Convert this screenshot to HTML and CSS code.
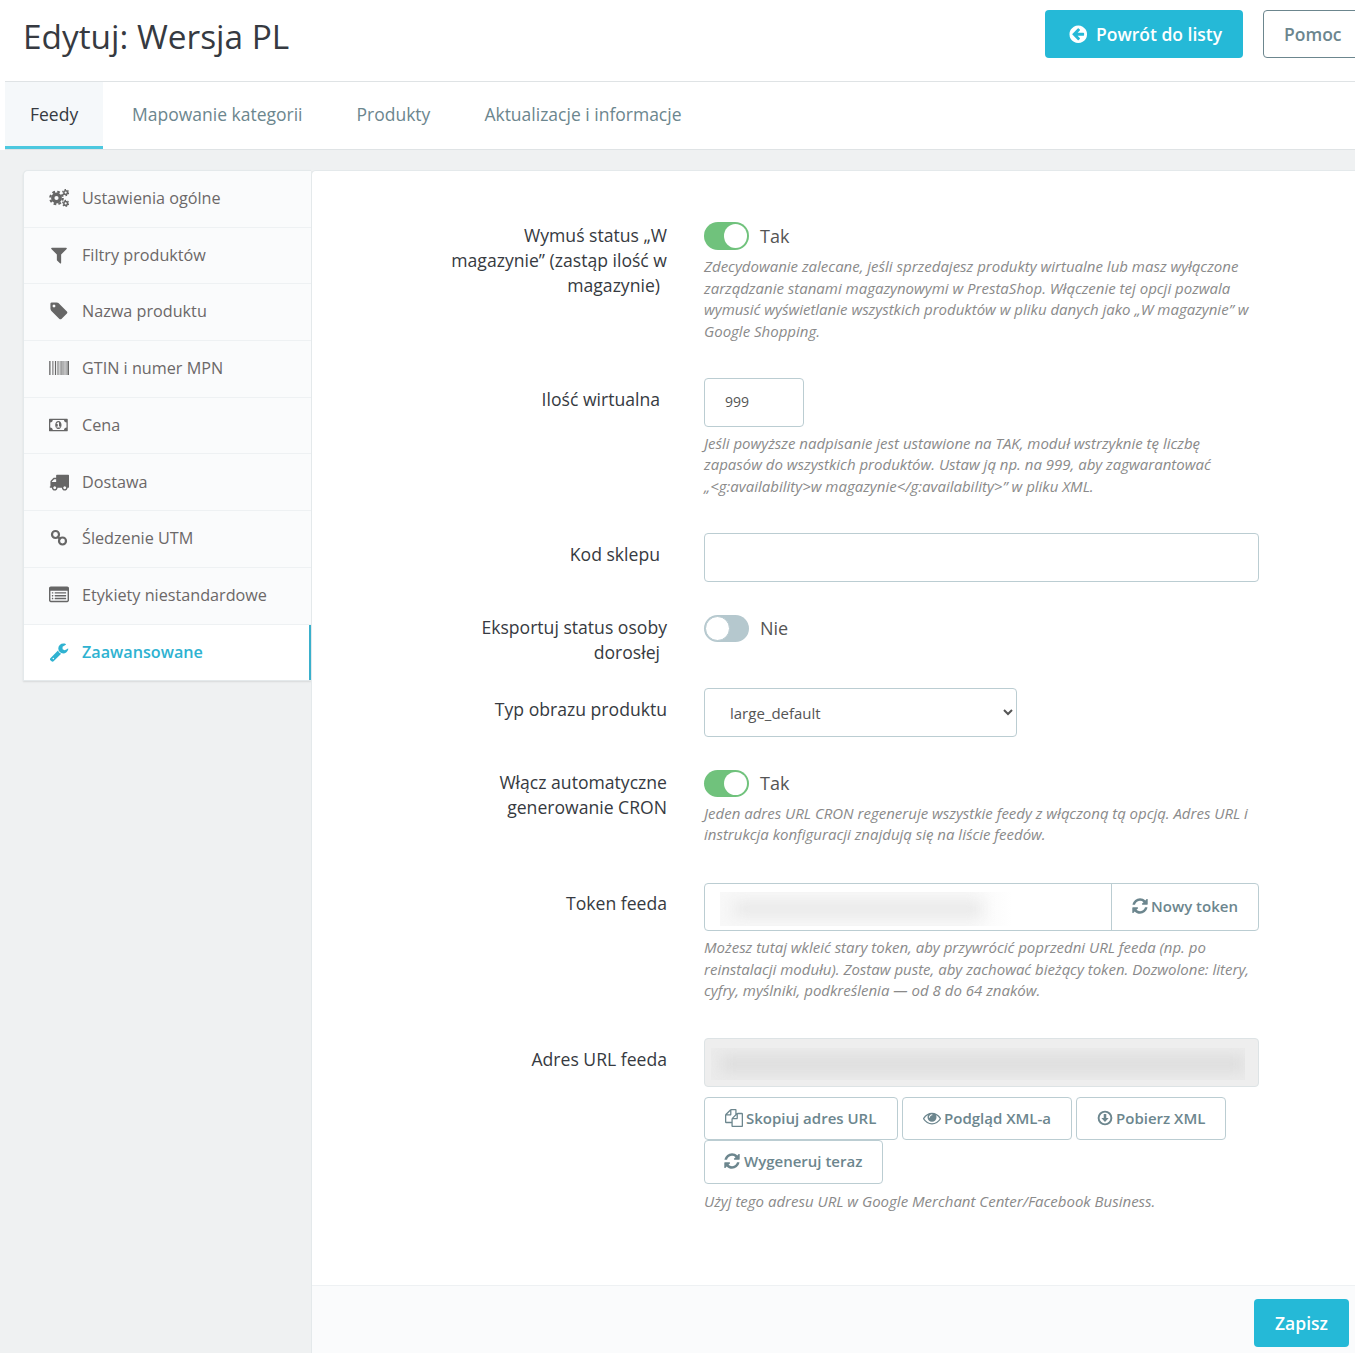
FILE: index.html
```html
<!DOCTYPE html>
<html lang="pl">
<head>
<meta charset="utf-8">
<title>Edytuj: Wersja PL</title>
<link rel="stylesheet" href="styles.css">
</head>
<body>
<svg class="defs" aria-hidden="true">
  <symbol id="i-refresh" viewBox="0 0 1792 1792"><path d="M1639 1056q0 5-1 7-64 268-268 434.5t-478 166.5q-146 0-282.5-55t-243.5-157l-129 129q-19 19-45 19t-45-19-19-45v-448q0-26 19-45t45-19h448q26 0 45 19t19 45-19 45l-137 137q71 66 161 102t187 36q134 0 250-65t186-179q11-17 53-117 8-23 30-23h192q13 0 22.5 9.5t9.5 22.5zm25-800v448q0 26-19 45t-45 19h-448q-26 0-45-19t-19-45 19-45l138-138q-148-137-349-137-134 0-250 65t-186 179q-11 17-53 117-8 23-30 23h-199q-13 0-22.5-9.5t-9.5-22.5v-7q65-268 270-434.5t480-166.5q146 0 284 55.5t245 156.5l130-129q19-19 45-19t45 19 19 45z"/></symbol>
</svg>
<div class="page">
  <header class="head">
    <h1 class="title">Edytuj: Wersja PL</h1>
    <div class="head-actions">
      <a class="btn-primary btn-back"><svg class="ic-back" viewBox="0 0 1792 1792"><path d="M1408 960v-128q0-26-19-45t-45-19h-502l189-189q19-19 19-45t-19-45l-91-91q-18-18-45-18t-45 18l-362 362-91 91q-18 18-18 45t18 45l91 91 362 362q18 18 45 18t45-18l91-91q18-18 18-45t-18-45l-189-189h502q26 0 45-19t19-45zm256-64q0 209-103 385.5t-279.5 279.5-385.5 103-385.5-103-279.5-279.5-103-385.5 103-385.5 279.5-279.5 385.5-103 385.5 103 279.5 279.5 103 385.5z"/></svg>Powrót do listy</a>
      <a class="btn-help">Pomoc</a>
    </div>
  </header>
  <nav class="tabs">
    <a class="tab tab-active">Feedy</a>
    <a class="tab">Mapowanie kategorii</a>
    <a class="tab">Produkty</a>
    <a class="tab">Aktualizacje i informacje</a>
  </nav>
  <main class="content">
    <aside class="side">
      <a class="side-item"><svg class="side-ic" viewBox="0 0 24 24"><g fill="none" stroke="currentColor"><circle cx="9" cy="12" r="4.500" stroke-width="4"/><circle cx="9" cy="12" r="7.500" stroke-width="2.600" stroke-dasharray="3.200 2.690"/><circle cx="20" cy="5.500" r="2.200" stroke-width="1.800"/><circle cx="20" cy="5.500" r="3.600" stroke-width="1.400" stroke-dasharray="1.900 1.870"/><circle cx="20" cy="18.500" r="2.200" stroke-width="1.800"/><circle cx="20" cy="18.500" r="3.600" stroke-width="1.400" stroke-dasharray="1.900 1.870"/></g></svg>Ustawienia ogólne</a>
      <a class="side-item"><svg class="side-ic" viewBox="0 0 1792 1792"><path d="M1595 295q17 41-14 70l-493 493v742q0 42-39 59-13 5-25 5-27 0-45-19l-256-256q-19-19-19-45v-486l-493-493q-31-29-14-70 17-39 59-39h1280q42 0 59 39z"/></svg>Filtry produktów</a>
      <a class="side-item"><svg class="side-ic" viewBox="0 0 1792 1792"><path d="M576 448q0-53-37.5-90.5t-90.5-37.5-90.5 37.5-37.5 90.5 37.5 90.5 90.5 37.5 90.5-37.5 37.5-90.5zm1067 576q0 53-37 90l-491 492q-39 37-91 37-53 0-90-37l-715-716q-38-37-64.5-101t-26.5-117v-416q0-52 38-90t90-38h416q53 0 117 26.5t102 64.5l715 714q37 39 37 91z"/></svg>Nazwa produktu</a>
      <a class="side-item"><svg class="side-ic" viewBox="0 0 20 20"><path d="M0 3h.8v14H0zM1.5 3h.5v14h-.5zM3 3h.6v14H3zM4.6 3h.5v14h-.5zM6 3h1.1v14H6zM8 3h.5v14H8zM9.5 3h.8v14h-.8zM11 3h.5v14H11zM12.4 3h1.1v14h-1.1zM14.4 3h.5v14h-.5zM15.6 3h.8v14h-.8zM17.2 3h.5v14h-.5zM18.4 3H20v14h-1.6z"/></svg>GTIN i numer MPN</a>
      <a class="side-item"><svg class="side-ic" viewBox="0 0 2048 1792"><path d="M768 1152h384v-96h-128v-448h-114l-148 137 77 80q42-37 55-57h2v288h-128v96zm512-256q0 70-21 142t-59.5 134-101.5 101-138 39-138-39-101.5-101-59.5-134-21-142 21-142 59.5-134 101.5-101 138-39 138 39 101.5 101 59.5 134 21 142zm512 256v-512q-106 0-181-75t-75-181h-1152q0 106-75 181t-181 75v512q106 0 181 75t75 181h1152q0-106 75-181t181-75zm128-832v1152q0 26-19 45t-45 19h-1792q-26 0-45-19t-19-45v-1152q0-26 19-45t45-19h1792q26 0 45 19t19 45z"/></svg>Cena</a>
      <a class="side-item"><svg class="side-ic" viewBox="0 0 1792 1792"><path d="M640 1408q0-52-38-90t-90-38-90 38-38 90 38 90 90 38 90-38 38-90zm-384-512h384v-256h-158q-13 0-22 9l-195 195q-9 9-9 22v30zm1280 512q0-52-38-90t-90-38-90 38-38 90 38 90 90 38 90-38 38-90zm256-1088v1024q0 15-4 26.5t-13.5 18.5-16.5 11.5-23.5 6-22.5 2-25.5 0-22.5-.5q0 106-75 181t-181 75-181-75-75-181h-384q0 106-75 181t-181 75-181-75-75-181h-64q-3 0-22.5.5t-25.5 0-22.5-2-23.5-6-16.5-11.5-13.5-18.5-4-26.5q0-26 19-45t45-19v-320q0-8-.5-35t0-38 2.5-34.5 6.5-37 14-30.5 22.5-30l198-198q19-19 50.5-32t58.5-13h160v-192q0-26 19-45t45-19h1024q26 0 45 19t19 45z"/></svg>Dostawa</a>
      <a class="side-item"><svg class="side-ic" viewBox="0 0 20 20"><g fill="none" stroke="currentColor" stroke-width="2.200"><circle cx="6.500" cy="6.500" r="3.500"/><circle cx="13.500" cy="13" r="3.500"/><path d="M8.500 8.500l3 3"/></g></svg>Śledzenie UTM</a>
      <a class="side-item"><svg class="side-ic" viewBox="0 0 1792 1792"><path d="M384 1184v64q0 13-9.5 22.5t-22.5 9.5h-64q-13 0-22.5-9.5t-9.5-22.5v-64q0-13 9.5-22.5t22.5-9.5h64q13 0 22.5 9.5t9.5 22.5zm0-256v64q0 13-9.5 22.5t-22.5 9.5h-64q-13 0-22.5-9.5t-9.5-22.5v-64q0-13 9.5-22.5t22.5-9.5h64q13 0 22.5 9.5t9.5 22.5zm0-256v64q0 13-9.5 22.5t-22.5 9.5h-64q-13 0-22.5-9.5t-9.5-22.5v-64q0-13 9.5-22.5t22.5-9.5h64q13 0 22.5 9.5t9.5 22.5zm1152 512v64q0 13-9.5 22.5t-22.5 9.5h-960q-13 0-22.5-9.5t-9.5-22.5v-64q0-13 9.5-22.5t22.5-9.5h960q13 0 22.5 9.5t9.5 22.5zm0-256v64q0 13-9.5 22.5t-22.5 9.5h-960q-13 0-22.5-9.5t-9.5-22.5v-64q0-13 9.5-22.5t22.5-9.5h960q13 0 22.5 9.5t9.5 22.5zm0-256v64q0 13-9.5 22.5t-22.5 9.5h-960q-13 0-22.5-9.5t-9.5-22.5v-64q0-13 9.5-22.5t22.5-9.5h960q13 0 22.5 9.5t9.5 22.5zm128 704v-832q0-13-9.5-22.5t-22.5-9.5h-1472q-13 0-22.5 9.5t-9.5 22.5v832q0 13 9.5 22.5t22.5 9.5h1472q13 0 22.5-9.5t9.5-22.5zm128-1088v1088q0 66-47 113t-113 47h-1472q-66 0-113-47t-47-113v-1088q0-66 47-113t113-47h1472q66 0 113 47t47 113z"/></svg>Etykiety niestandardowe</a>
      <a class="side-item side-active"><svg class="side-ic" viewBox="0 0 1792 1792"><path d="M448 1472q0-26-19-45t-45-19-45 19-19 45 19 45 45 19 45-19 19-45zm644-420l-682 682q-37 37-90 37-52 0-91-37l-106-108q-38-36-38-90 0-53 38-91l681-681q39 98 114.5 173.5t173.5 114.5zm634-435q0 39-23 106-47 134-164.5 217.5t-258.5 83.5q-185 0-316.5-131.5t-131.5-316.5 131.5-316.5 316.5-131.5q58 0 121.5 16.5t107.5 46.5q16 11 16 28t-16 28l-293 169v224l193 107q5-3 79-48.5t135.5-81 70.5-35.5q15 0 23.5 10t8.5 25z"/></svg>Zaawansowane</a>
    </aside>
    <section class="panel">
      <form class="form">
        <div class="row">
          <div class="label lbl-narrow lbl-toggle"><span class="lbl-inset">Wymuś status „W magazynie” (zastąp ilość w magazynie)</span></div>
          <div class="ctl">
            <div class="switch-line"><span class="switch switch-on"><i class="knob"></i></span><span class="switch-text">Tak</span></div>
            <p class="help">Zdecydowanie zalecane, jeśli sprzedajesz produkty wirtualne lub masz wyłączone zarządzanie stanami magazynowymi w PrestaShop. Włączenie tej opcji pozwala wymusić wyświetlanie wszystkich produktów w pliku danych jako „W magazynie” w Google Shopping.</p>
          </div>
        </div>
        <div class="row">
          <div class="label lbl-input"><span class="lbl-inset">Ilość wirtualna</span></div>
          <div class="ctl">
            <input class="input input-qty" type="text" value="999">
            <p class="help">Jeśli powyższe nadpisanie jest ustawione na TAK, moduł wstrzyknie tę liczbę zapasów do wszystkich produktów. Ustaw ją np. na 999, aby zagwarantować „&lt;g:availability&gt;w magazynie&lt;/g:availability&gt;” w pliku XML.</p>
          </div>
        </div>
        <div class="row row-short">
          <div class="label lbl-input"><span class="lbl-inset">Kod sklepu</span></div>
          <div class="ctl"><input class="input" type="text"></div>
        </div>
        <div class="row row-tight">
          <div class="label lbl-narrow"><span class="lbl-inset">Eksportuj status osoby dorosłej</span></div>
          <div class="ctl">
            <div class="switch-line switch-line-short"><span class="switch switch-off"><i class="knob"></i></span><span class="switch-text">Nie</span></div>
          </div>
        </div>
        <div class="row row-short">
          <div class="label lbl-input">Typ obrazu produktu</div>
          <div class="ctl">
            <select class="select"><option>large_default</option></select>
          </div>
        </div>
        <div class="row row-cron">
          <div class="label lbl-narrow">Włącz automatyczne generowanie CRON</div>
          <div class="ctl">
            <div class="switch-line switch-line-short"><span class="switch switch-on"><i class="knob"></i></span><span class="switch-text">Tak</span></div>
            <p class="help">Jeden adres URL CRON regeneruje wszystkie feedy z włączoną tą opcją. Adres URL i instrukcja konfiguracji znajdują się na liście feedów.</p>
          </div>
        </div>
        <div class="row row-token">
          <div class="label lbl-token">Token feeda</div>
          <div class="ctl">
            <div class="group">
              <div class="group-field"><div class="blur-box blur-token"><div class="blur-bar blur-bar-token"></div></div></div>
              <a class="group-btn"><svg class="btn-ic"><use href="#i-refresh"/></svg>Nowy token</a>
            </div>
            <p class="help help-token">Możesz tutaj wkleić stary token, aby przywrócić poprzedni URL feeda (np. po reinstalacji modułu). Zostaw puste, aby zachować bieżący token. Dozwolone: litery, cyfry, myślniki, podkreślenia — od 8 do 64 znaków.</p>
          </div>
        </div>
        <div class="row row-last">
          <div class="label lbl-input">Adres URL feeda</div>
          <div class="ctl">
            <div class="url-field"><div class="blur-box blur-url"><div class="blur-bar blur-bar-url"></div></div></div>
            <div class="url-actions">
              <a class="btn-line btn-line-copy"><svg class="btn-ic btn-ic-wide" viewBox="0 0 1792 1792"><path d="M1696 384q40 0 68 28t28 68v1216q0 40-28 68t-68 28h-960q-40 0-68-28t-28-68v-288h-544q-40 0-68-28t-28-68v-672q0-40 20-88t48-76l408-408q28-28 76-48t88-20h416q40 0 68 28t28 68v328q68-40 128-40h416zm-544 213l-299 299h299v-299zm-640-384l-299 299h299v-299zm196 647l316-316v-416h-384v416q0 40-28 68t-68 28h-416v640h512v-256q0-40 20-88t48-76zm956 804v-1152h-384v416q0 40-28 68t-68 28h-416v640h896z"/></svg>Skopiuj adres URL</a>
              <a class="btn-line"><svg class="btn-ic btn-ic-wide" viewBox="0 0 1792 1792"><path d="M1664 960q-152-236-381-353 61 104 61 225 0 185-131.500 316.500t-316.500 131.500-316.500-131.500-131.500-316.500q0-121 61-225-229 117-381 353 133 205 333.500 326.500t434.500 121.500 434.500-121.500 333.500-326.500zm-720-384q0-20-14-34t-34-14q-125 0-214.500 89.500t-89.500 214.500q0 20 14 34t34 14 34-14 14-34q0-86 61-147t147-61q20 0 34-14t14-34zm848 384q0 34-20 69-140 230-376.500 368.500t-499.500 138.500-499.500-139-376.500-368q-20-35-20-69t20-69q140-229 376.500-368t499.500-139 499.500 139 376.500 368q20 35 20 69z"/></svg>Podgląd XML-a</a>
              <a class="btn-line"><svg class="btn-ic btn-ic-down" viewBox="0 0 20 20"><circle cx="10" cy="10" r="8" fill="none" stroke="currentColor" stroke-width="2.400"/><path d="M8.400 5h3.200v5h3l-4.600 5-4.600-5h3z"/></svg>Pobierz XML</a>
              <a class="btn-line"><svg class="btn-ic btn-ic-lead"><use href="#i-refresh"/></svg>Wygeneruj teraz</a>
            </div>
            <p class="help help-url">Użyj tego adresu URL w Google Merchant Center/Facebook Business.</p>
          </div>
        </div>
      </form>
      <footer class="panel-foot"><a class="btn-primary btn-save">Zapisz</a></footer>
    </section>
  </main>
</div>
</body>
</html>
```

FILE: styles.css
```css
* { box-sizing: border-box; }
html, body { margin: 0; height: 1353px; overflow: hidden; background: #fff; }
body { font-family: "Open Sans", "Noto Sans", sans-serif; color: #363a41; }
.defs { display: none; }
.page { width: 1362px; height: 1353px; display: flex; flex-direction: column; }

.head { height: 82px; margin-left: 5px; padding: 10px 0 0 18px; border-bottom: 1px solid #dfe3e5; display: flex; justify-content: space-between; align-items: flex-start; }
.title { margin: 5px 0 0; font-size: 33.4px; line-height: 42px; font-weight: 400; color: #363a41; }
.head-actions { display: flex; gap: 20px; }
.btn-primary { display: flex; align-items: center; background: #25b9d7; color: #fff; border-radius: 4px; font-size: 17.5px; font-weight: 600; }
.btn-back { height: 48px; width: 198px; padding-left: 23px; }
.ic-back { width: 20.5px; height: 20.5px; fill: #fff; margin-right: 7.5px; }
.btn-help { height: 48px; width: 99px; padding-left: 20px; display: flex; align-items: center; border: 1px solid #6c868e; border-radius: 4px; color: #6c868e; font-size: 17.5px; font-weight: 600; }

.tabs { height: 68px; margin-left: 5px; display: flex; border-bottom: 1px solid #dfe3e5; background: #fff; }
.tab { padding: 0 27px 3px; display: flex; align-items: center; font-size: 17.5px; color: #6c868e; height: 67px; }
.tab-active { padding: 0 25px; margin-right: 2px; color: #363a41; background: #f5f8fa; border-bottom: 3px solid #4cc8df; width: 98px; }

.content { flex: 1; min-height: 0; background: #eff1f2; padding: 20px 0 0 23px; display: flex; align-items: flex-start; }
.side { width: 288px; background: #fafbfc; border: 1px solid #e4e9eb; border-right: 0; border-radius: 5px 0 0 0; box-shadow: 0 1px 2px rgba(0, 0, 0, .1); display: flex; flex-direction: column; }
.side-item { height: 56.7px; padding: 0 0 1.5px 25px; display: flex; align-items: center; font-size: 16.2px; color: #6c6868; border-bottom: 1px solid #eef1f3; flex: none; }
.side-item:last-child { height: 55px; padding-bottom: 0; border-bottom: 0; }
.side-ic { width: 20px; height: 20px; margin-right: 13px; fill: currentColor; color: #666; flex: none; }
.side-active { background: #fff; color: #2eb2d1; font-weight: 600; border-right: 2px solid #3ab0cc; }
.side-active .side-ic { color: #2eb2d1; }

.panel { flex: 1; height: 1183px; background: #fff; border: 1px solid #e4e9eb; border-bottom: 0; border-right: 0; border-radius: 5px 0 0 0; display: flex; flex-direction: column; }
.form { flex: 1; padding-top: 51px; }
.row { display: grid; grid-template-columns: 355px 555px; column-gap: 37px; margin-bottom: 35.5px; }
.row-short { margin-bottom: 33px; }
.row-tight { margin-bottom: 23px; }
.row-cron { margin-bottom: 37px; }
.row-token { margin-bottom: 36px; }
.row-last { margin-bottom: 0; }
.label { font-size: 17.6px; line-height: 25px; text-align: right; color: #363a41; }
.lbl-narrow { padding-left: 130px; }
.lbl-toggle { padding-top: 1px; }
.lbl-input { padding-top: 9px; }
.lbl-token { padding-top: 8px; }
.lbl-inset { padding-right: 7px; }
.ctl { min-width: 0; }
.help { margin: 6px 0 0; font-size: 15px; line-height: 21.5px; font-style: italic; color: #8a8a8a; }
.help-token { margin-top: 6.5px; }
.help-url { margin-top: 7px; }

.switch-line { display: flex; align-items: center; height: 28px; }
.switch-line-short { height: 27px; }
.switch { width: 45px; height: 100%; border-radius: 14px; position: relative; flex: none; }
.switch-on { background: #70c27c; }
.switch-off { background: #b5c8ce; }
.knob { position: absolute; top: 2px; bottom: 2px; width: 23px; border-radius: 50%; background: #fff; }
.switch-on .knob { right: 2px; }
.switch-off .knob { left: 1px; width: 25px; top: 1px; bottom: 1px; border: 1px solid #b5c8ce; }
.switch-text { margin-left: 11px; font-size: 18px; color: #555; }

.input { display: block; width: 100%; height: 49px; padding: 0 20px 1px; border: 1px solid #bbcdd2; border-radius: 4px; background: #fff; font: 400 14px "Open Sans", sans-serif; color: #555; outline: 0; }
.input-qty { width: 100px; }
.select { display: block; width: 313px; height: 49px; padding: 2px 21px 0; border: 1px solid #bbcdd2; border-radius: 4px; background: #fff; font: 400 15px "Open Sans", sans-serif; color: #555; }

.group { display: flex; height: 48px; border: 1px solid #bbcdd2; border-radius: 4px; }
.group-field { flex: 1; padding: 8px 0 0 15px; overflow: hidden; }
.group-btn { width: 147px; padding: 0 0 2px 19px; border-left: 1px solid #bbcdd2; display: flex; align-items: center; font-size: 15px; font-weight: 600; color: #6c868e; }
.btn-ic { width: 18px; height: 18px; fill: currentColor; margin-right: 2px; flex: none; }
.btn-ic-wide { margin-right: 3px; }
.btn-ic-lead { margin: 0 3px 0 -2px; }
.btn-ic-down { width: 16px; height: 16px; margin-right: 3px; }

.blur-box { overflow: hidden; position: relative; }
.blur-token { width: 292px; height: 34px; background: linear-gradient(to right, #f8f8f8 85%, #fff); }
.blur-url { height: 32px; background: #ebebeb; }
.blur-bar { position: absolute; filter: blur(7px); }
.blur-bar-token { left: 14px; right: 30px; top: 9px; height: 16px; background: #e9e9e9; }
.blur-bar-url { left: 10px; right: 0; top: 8px; height: 16px; background: #dddddd; }

.url-field { height: 49px; padding: 9px 13px 0 6px; border: 1px solid #dde3e5; border-radius: 4px; background: #eeeeee; }
.url-actions { display: flex; flex-wrap: wrap; gap: 0 4px; margin-top: 10px; }
.btn-line { height: 43.5px; padding: 0 20px 1px; border: 1px solid #bbcdd2; border-radius: 4px; display: flex; align-items: center; font-size: 15px; font-weight: 600; color: #6c868e; }
.btn-line-copy { width: 194px; }

.panel-foot { height: 68px; flex: none; padding: 13px 13px 0 0; background: #fafbfc; border-top: 1px solid #eef1f3; display: flex; justify-content: flex-end; }
.btn-save { width: 95px; height: 48px; justify-content: center; }
```
